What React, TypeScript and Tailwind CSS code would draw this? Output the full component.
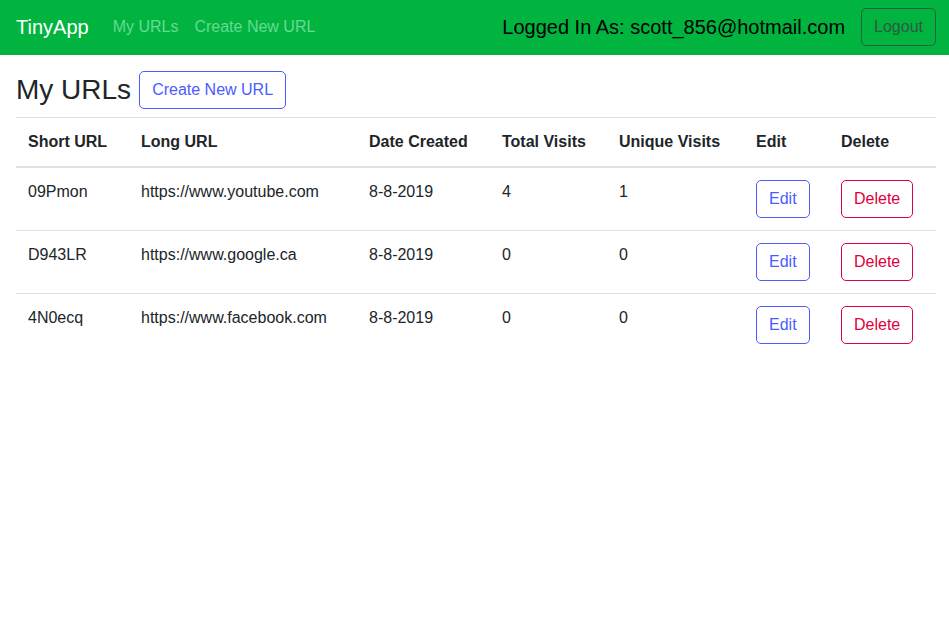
const urls = [
  { short: '09Pmon', long: 'https://www.youtube.com', date: '8-8-2019', total: 4, unique: 1 },
  { short: 'D943LR', long: 'https://www.google.ca', date: '8-8-2019', total: 0, unique: 0 },
  { short: '4N0ecq', long: 'https://www.facebook.com', date: '8-8-2019', total: 0, unique: 0 },
];

const App = () => {
  return (
    <div className="min-h-screen bg-white text-[#212529] font-['Liberation_Sans',Arial,sans-serif]">
      <nav className="flex h-[55px] items-center bg-[#00b43f] pb-[2px] pl-4 pr-[13px]">
        <a href="#" className="mr-4 text-[20px] leading-[30px] text-white">
          TinyApp
        </a>
        <div className="flex">
          <a href="#" className="px-2 text-[16px] text-[#66da93]">
            My URLs
          </a>
          <a href="#" className="px-2 text-[16px] text-[#66da93]">
            Create New URL
          </a>
        </div>
        <div className="ml-auto flex items-center gap-4">
          <span className="text-[20px] text-black">Logged In As: scott_856@hotmail.com</span>
          <button className="h-[38px] rounded-[5px] border border-[#2a5e3c] px-3 text-[16px] text-[#2f5a40]">
            Logout
          </button>
        </div>
      </nav>

      <div className="pl-4 pr-[13px]">
        <div className="flex h-[62px] items-center gap-2 pt-[8px]">
          <h3 className="text-[28px] leading-[34px]">My URLs</h3>
          <button className="h-[38px] rounded-[5px] border border-[#4a5cff] px-3 text-[16px] text-[#4a5cff]">
            Create New URL
          </button>
        </div>

        <table className="w-full table-fixed border-collapse text-left text-[16px] leading-6">
          <colgroup>
            <col className="w-[113px]" />
            <col className="w-[228px]" />
            <col className="w-[133px]" />
            <col className="w-[117px]" />
            <col className="w-[137px]" />
            <col className="w-[85px]" />
            <col />
          </colgroup>
          <thead>
            <tr className="border-t border-b-2 border-t-[#dee2e6] border-b-[#dee2e6]">
              <th className="p-3 font-bold">Short URL</th>
              <th className="p-3 font-bold">Long URL</th>
              <th className="p-3 font-bold">Date Created</th>
              <th className="p-3 font-bold">Total Visits</th>
              <th className="p-3 font-bold">Unique Visits</th>
              <th className="p-3 font-bold">Edit</th>
              <th className="p-3 font-bold">Delete</th>
            </tr>
          </thead>
          <tbody>
            {urls.map((url, i) => (
              <tr key={url.short} className={i > 0 ? 'border-t border-[#dee2e6]' : ''}>
                <td className="p-3 align-top">{url.short}</td>
                <td className="p-3 align-top">{url.long}</td>
                <td className="p-3 align-top">{url.date}</td>
                <td className="p-3 align-top">{url.total}</td>
                <td className="p-3 align-top">{url.unique}</td>
                <td className="p-3 align-top">
                  <button className="h-[38px] rounded-[5px] border border-[#4a5cff] px-3 text-[#4a5cff]">
                    Edit
                  </button>
                </td>
                <td className="p-3 align-top">
                  <button className="h-[38px] rounded-[5px] border border-[#e0003c] px-3 text-[#e0003c]">
                    Delete
                  </button>
                </td>
              </tr>
            ))}
          </tbody>
        </table>
      </div>
    </div>
  );
};

export default App;
